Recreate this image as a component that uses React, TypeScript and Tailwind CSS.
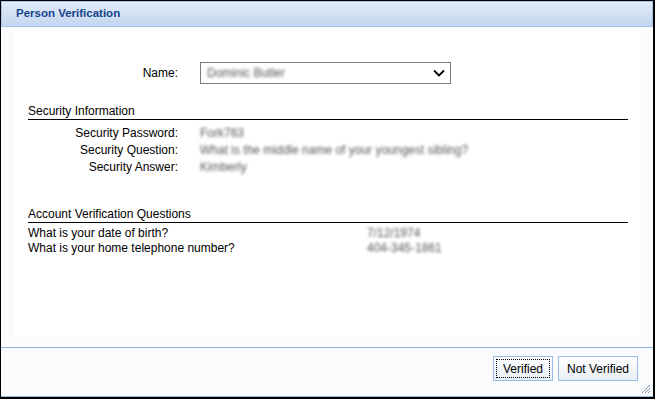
import React from "react";

const font = { fontFamily: '"Liberation Sans", Arial, sans-serif' };

function Blur({ children }: { children: React.ReactNode }) {
  return <span className="text-[#555] blur-[1.4px]">{children}</span>;
}

export default function App() {
  return (
    <div
      style={font}
      className="w-[655px] h-[399px] bg-[#f9fbfd] border-l border-t border-r-2 border-b-2 border-black flex flex-col text-[12px] text-black"
    >
      <div className="h-[26px] shrink-0 border border-[#a9c4ea] bg-gradient-to-b from-[#e3ecf8] to-[#c2d6f0] flex items-center pl-[14px] text-[11.5px] font-bold text-[#15428b]">
        Person Verification
      </div>
      <div className="flex-1 px-[13px] pt-[5px] pb-[10px] border-b border-[#8db2e3]">
        <div className="bg-white h-full pt-[30px] pr-[12px]">
          <div className="flex items-center h-[22px]">
            <div className="w-[164px] text-right pr-[0px]">Name:</div>
            <div className="ml-[22px] w-[251px] h-[22px] border border-[#7a7a7a] bg-white flex items-center justify-between pl-[6px] pr-[4px]">
              <Blur>Dominic Butler</Blur>
              <svg width="14" height="10" viewBox="0 0 14 10">
                <path d="M2 2.5 L7 7.5 L12 2.5" fill="none" stroke="#000" strokeWidth="1.8" />
              </svg>
            </div>
          </div>
          <div className="mt-[20px] ml-[14px] border-b border-black leading-[14px] pb-[1px]">
            Security Information
          </div>
          <div className="mt-[5px] flex flex-col leading-[17px]">
            <div className="flex">
              <div className="w-[164px] text-right">Security Password:</div>
              <div className="ml-[22px]"><Blur>Fork763</Blur></div>
            </div>
            <div className="flex">
              <div className="w-[164px] text-right">Security Question:</div>
              <div className="ml-[22px]"><Blur>What is the middle name of your youngest sibling?</Blur></div>
            </div>
            <div className="flex">
              <div className="w-[164px] text-right">Security Answer:</div>
              <div className="ml-[22px]"><Blur>Kimberly</Blur></div>
            </div>
          </div>
          <div className="mt-[31px] ml-[14px] border-b border-black leading-[14px] pb-[1px]">
            Account Verification Questions
          </div>
          <div className="ml-[14px] flex flex-col leading-[15px] mt-[3px]">
            <div className="flex">
              <div className="w-[339px]">What is your date of birth?</div>
              <Blur>7/12/1974</Blur>
            </div>
            <div className="flex">
              <div className="w-[339px]">What is your home telephone number?</div>
              <Blur>404-345-1861</Blur>
            </div>
          </div>
        </div>
      </div>
      <div className="h-[49px] shrink-0 relative flex items-start justify-end gap-[5px] pt-[8px] pr-[15px] border-b border-[#99bbe8]">
        <button className="w-[60px] h-[25px] border border-[#99bbe8] bg-gradient-to-b from-[#ffffff] to-[#e8eef6] p-[2px]">
          <div className="w-full h-full border border-dotted border-black flex items-center justify-center">Verified</div>
        </button>
        <button className="w-[80px] h-[25px] border border-[#99bbe8] bg-gradient-to-b from-[#ffffff] to-[#e8eef6] flex items-center justify-center">
          Not Verified
        </button>
        <svg className="absolute right-[2px] bottom-[2px]" width="12" height="12" viewBox="0 0 12 12">
          <path d="M11 3 L3 11 M11 6 L6 11 M11 9 L9 11" stroke="#7f8fa8" strokeWidth="1" />
        </svg>
      </div>
    </div>
  );
}
